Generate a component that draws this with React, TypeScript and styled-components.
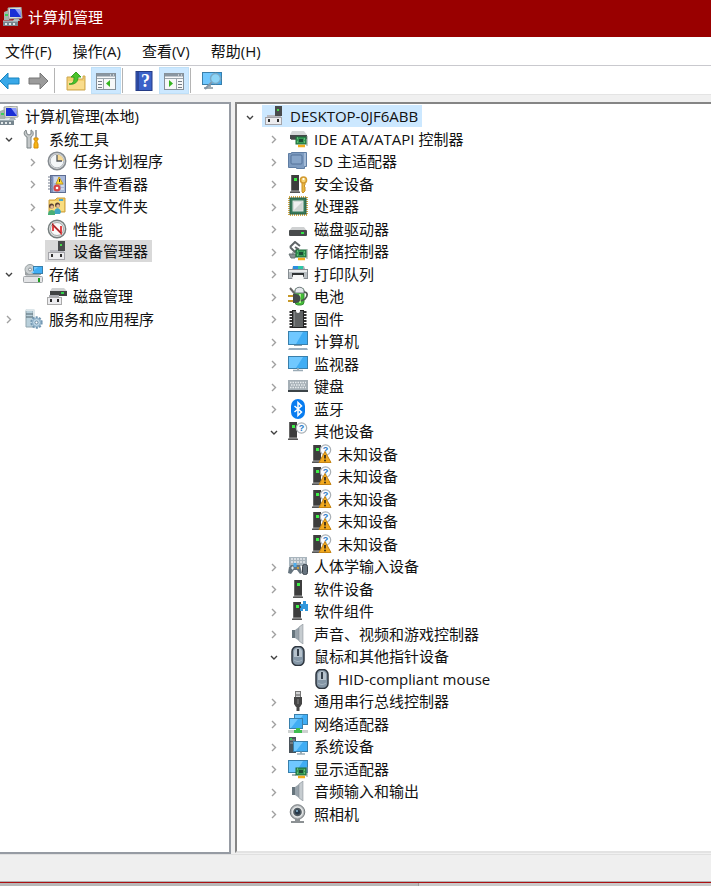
import React, { ReactNode } from "react";
import styled, { createGlobalStyle, css } from "styled-components";

const GlobalStyle = createGlobalStyle`
  * { box-sizing: border-box; }
  body { margin: 0; background: #f0f0f0; }
  button { font: inherit; color: inherit; background: none; border: 0; padding: 0; margin: 0; }
`;

const Window = styled.div`
  display: flex;
  flex-direction: column;
  min-height: 100vh;
  overflow: hidden;
  background: #f0f0f0;
  color: #111;
  font-family: "Open Sans", "Noto Sans CJK SC", sans-serif;
  font-size: 15px;
  line-height: 22px;
`;

const TitleBar = styled.header`
  display: flex;
  align-items: center;
  gap: 5px;
  height: 37px;
  padding: 0 3px 3px;
  background: #990000;
  color: #fff;
`;

const Title = styled.h1`
  margin: 0;
  font-size: 15px;
  font-weight: 400;
`;

const MenuBar = styled.nav`
  display: flex;
  align-items: center;
  gap: 21px;
  height: 28px;
  padding-left: 5px;
  background: #fff;
`;

const MenuItem = styled.button`
  white-space: nowrap;
`;

const Toolbar = styled.div`
  display: flex;
  align-items: center;
  height: 30px;
  border-top: 1px solid #c9c9ce;
  border-bottom: 1px solid #e4e4e4;
  background: #fff;
`;

const ToolButton = styled.button<{ $active?: boolean; $edge?: boolean }>`
  display: flex;
  align-items: center;
  justify-content: ${(p) => (p.$edge ? "flex-start" : "center")};
  width: ${(p) => (p.$edge ? 23 : 30)}px;
  height: 27px;
  padding-top: 1px;
  ${(p) =>
    p.$active &&
    css`
      background: #cce8ff;
      border: 1px solid #bfe0f8;
    `}
`;

const Separator = styled.span`
  width: 1px;
  height: 25px;
  margin: 0 6px 0 1px;
  background: #b4b4b4;
`;

const Panes = styled.main`
  display: flex;
  flex: 1;
  gap: 4px;
  padding-top: 7px;
`;

const NavPane = styled.section`
  flex: 0 0 auto;
  width: 231px;
  padding-top: 1px;
  overflow: hidden;
  background: #fff;
  border: solid #969ba3;
  border-width: 2px 2px 2px 0;
`;

const DevicePane = styled.section`
  flex: 1;
  min-width: 0;
  margin-bottom: 1px;
  padding: 1px 0 24px 1px;
  background: #fff;
  border: solid #858585;
  border-width: 2px 0 2px 2px;
  border-bottom-color: #e3e3e3;
`;

const TreeList = styled.ul<{ $shift?: boolean }>`
  display: grid;
  grid-auto-rows: 22px 23px;
  margin: 0 0 0 ${(p) => (p.$shift ? -3 : 0)}px;
  padding: 0;
  list-style: none;
`;

const TreeRow = styled.li<{ $depth: number }>`
  display: flex;
  padding-left: ${(p) => p.$depth * 24}px;
`;

const Expander = styled.button`
  display: flex;
  align-items: center;
  justify-content: center;
  width: 24px;
  padding-top: 1px;
`;

const Spacer = styled.span`
  width: 24px;
`;

const TreeItem = styled.button<{ $mark?: "active" | "muted" }>`
  display: flex;
  align-items: center;
  gap: 4px;
  padding-right: 4px;
  white-space: nowrap;
  text-align: left;
  background: ${(p) => (p.$mark === "active" ? "#cce8ff" : p.$mark === "muted" ? "#d9d9d9" : "transparent")};
`;

const IconBox = styled.span`
  display: flex;
  justify-content: center;
  width: 24px;
`;

const StatusBar = styled.footer`
  height: 28px;
  border-top: 1px solid #e0e0e0;
  border-bottom: 1px solid #b2b2b2;
  background: #efefef;
`;

const BottomEdge = styled.div`
  display: flex;
  height: 4px;
  border-top: 1px solid #ad1012;
  background: #cacaca;
`;

const BottomShade = styled.span`
  width: 59%;
  background: #b8b8b8;
  border-right: 1px solid #999;
`;

const Svg = ({ children }: { children: ReactNode }) => (
  <svg width="20" height="20" viewBox="0 0 20 20" aria-hidden="true">
    {children}
  </svg>
);

/* Shared icon parts */
const Tower = ({ x = 0 }: { x?: number }) => (
  <g transform={`translate(${x} 0)`}>
    <rect x="1" y="1" width="8" height="16" fill="#3d3d3d" />
    <rect x="1" y="1" width="1" height="16" fill="#666" />
    <path d="M1 17h8l1 1v1H0v-1z" fill="#555" />
    <path d="M1 17h8" stroke="#aaa" />
    <rect x="4" y="4" width="3" height="3" fill="#3df046" />
  </g>
);

const Card = ({ x, y }: { x: number; y: number }) => (
  <g transform={`translate(${x} ${y})`}>
    <path d="M11 -1v10" stroke="#8d9692" strokeWidth="1" />
    <rect x="0" y="0" width="10" height="7" fill="#379a57" stroke="#1d6c3b" />
    <rect x="3" y="2" width="4" height="3" fill="#1b4f35" />
    <path d="M1 1h1M8 2h1M1 5h1M8 5h1" stroke="#91e39a" />
    <path d="M2 9h7" stroke="#f2ac1e" strokeWidth="2.5" />
  </g>
);

const Screen = ({ x, y, w, h }: { x: number; y: number; w: number; h: number }) => (
  <g>
    <rect x={x + 0.5} y={y + 0.5} width={w - 1} height={h - 1} fill="#40adf4" stroke="#397fab" />
    <path d={`M${x + 1} ${y + 1}h${w - 6}l-7 ${h - 2}H${x + 1}z`} fill="#70c8ff" />
  </g>
);

const Question = ({ y = 7 }: { y?: number }) => (
  <g>
    <circle cx="13.5" cy={y} r="5.2" fill="#fafcff" stroke="#aab0b5" strokeWidth="1.2" />
    <text x="13.5" y={y + 3} textAnchor="middle" fontFamily="Liberation Sans" fontWeight="700" fontSize="9" fill="#2779c4">
      ?
    </text>
  </g>
);

const icons: Record<string, ReactNode> = {
  console: (
    <>
      <path d="M1 5l5-2v10H1z" fill="#a7b4ad" />
      <path d="M2 8h3" stroke="#39d05b" strokeWidth="2" />
      <path d="M5 1l13-1 1 11-13 1z" fill="#dedfd5" stroke="#9ba1a0" />
      <path d="M7 2h10l1 8H7z" fill="#1a2fd6" />
      <path d="M12 2h5l1 8z" fill="#8e9dfa" />
      <path d="M11 12h5l1 2h-7z" fill="#a9b2b8" />
      <path d="M0 14h15v5H0z" fill="#77868f" />
      <path d="M0 14h15" stroke="#c6d3d8" />
      <path d="M2 17h2M6 17h2M10 17h2" stroke="#e3e9ea" strokeWidth="2" />
    </>
  ),
  tools: (
    <>
      <path d="M3 1C0 3 1 7 4 8v11h4V8c3-1 3-6 0-7v4L6 6 4 5z" fill="#c4c8c9" stroke="#7d8587" />
      <path d="M12 1h2v10h-2z" fill="#a2a8ad" />
      <path d="M11 9h4v2h-1v2l1 2v4h-4v-4l1-2v-2h-1z" fill="#f6b414" stroke="#d68d08" />
    </>
  ),
  clock: (
    <>
      <circle cx="10" cy="10" r="8.7" fill="#d9dcde" stroke="#858b90" strokeWidth="1.5" />
      <circle cx="10" cy="10" r="6.8" fill="#f3f6f8" stroke="#b2b7bc" />
      <path d="M10 10V3.5a6.5 6.5 0 0 1 6.5 6.5z" fill="#f6d995" />
      <path d="M10 4v6h5" fill="none" stroke="#51565b" strokeWidth="1.3" />
    </>
  ),
  events: (
    <>
      <rect x="3.5" y="1.5" width="15" height="17" fill="#a9b9da" stroke="#5c6c92" />
      <path d="M5 2v16" stroke="#53699a" />
      <path d="M1 3h4M1 6h4M1 9h4M1 12h4M1 15h4" stroke="#717a8b" />
      <path d="M7 4h5M7 6h4M7 8h3M14 12h3M14 15h3" stroke="#f4f6fb" />
      <path d="M12 3l4 7H9z" fill="#ffdb35" stroke="#c59a1d" />
      <path d="M12.5 5v3" stroke="#333" />
      <circle cx="10" cy="14" r="3.5" fill="#d74345" />
      <circle cx="10" cy="14" r="1.3" fill="#fff" />
    </>
  ),
  shared: (
    <>
      <path d="M2 4h6l2-2h8v14H2z" fill="#eec75c" stroke="#cca03f" />
      <path d="M3 5h14v10H3z" fill="#f9dd80" />
      <path d="M12 4h4" stroke="#4ba9c9" strokeWidth="2" />
      <circle cx="4.5" cy="10" r="2.5" fill="#594033" />
      <circle cx="10.5" cy="9" r="2.5" fill="#594033" />
      <circle cx="5" cy="11" r="1.8" fill="#e6b992" />
      <circle cx="11" cy="10" r="1.8" fill="#e6b992" />
      <path d="M7 16c1-5 6-5 7 0l-1 2H8z" fill="#40a6c5" />
      <path d="M1 18c0-5 7-5 7-1v2H1z" fill="#49ae75" />
    </>
  ),
  performance: (
    <>
      <circle cx="10" cy="10" r="8.7" fill="#d9dcdc" stroke="#757d7d" strokeWidth="1.4" />
      <circle cx="10" cy="10" r="6.5" fill="#fafafa" stroke="#a6acac" />
      <path d="M6 12V6l8 8V7" fill="none" stroke="#df3133" strokeWidth="1.8" />
      <path d="M5 5l9 9" stroke="#7b3234" strokeWidth="1" />
    </>
  ),
  device: (
    <>
      <path d="M3 9h14v3H3z" fill="#b9bac0" />
      <rect x="11" y="0" width="7" height="10" fill="#484b4c" />
      <rect x="13" y="3" width="2" height="2" fill="#46da49" />
      <rect x="1.5" y="11.5" width="16" height="7" fill="#ececef" stroke="#a4a4a9" />
      <path d="M5 13v3M14 13v3" stroke="#2e2e2e" strokeWidth="2" />
    </>
  ),
  storage: (
    <>
      <path d="M2 7l3-3h9l4 4v3H2z" fill="#9b9fa2" />
      <circle cx="7" cy="5.5" r="5" fill="#cbd0d2" stroke="#9ba3a5" />
      <circle cx="7" cy="5.5" r="1.5" fill="#f8fafa" stroke="#8a9295" />
      <Screen x={10} y={2} w={10} h={8} />
      <path d="M3 11h13l3 3H1z" fill="#c4c7ca" />
      <rect x="0.5" y="12.5" width="19" height="6" rx="1" fill="#e3e4e6" stroke="#a1a5a8" />
      <path d="M16 14v4" stroke="#1c9b20" strokeWidth="2" />
    </>
  ),
  diskmgmt: (
    <>
      <path d="M5 2h12l3 3H3z" fill="#d0d2d3" />
      <rect x="3" y="5" width="17" height="5" fill="#404343" />
      <path d="M14 7h3" stroke="#30d349" strokeWidth="2" />
      <path d="M2 9h10v3H2z" fill="#a9abb0" />
      <rect x="0.5" y="11.5" width="14" height="7" fill="#ececef" stroke="#aaa" />
      <path d="M4 13v3M11 13v3" stroke="#282828" strokeWidth="2" />
    </>
  ),
  services: (
    <>
      <path d="M3 1h7v17H3z" fill="#b9d0db" stroke="#91a5ae" />
      <path d="M2 1l2-1h7l1 1v17h-2V2H2z" fill="#dce6ea" />
      <path d="M3 5h7M3 8h7" stroke="#526770" />
      <circle cx="13.5" cy="13.5" r="5.2" fill="#b9d2e4" stroke="#7397b2" strokeWidth="2" strokeDasharray="2 1.3" />
      <circle cx="13.5" cy="13.5" r="4" fill="#bbd5e6" stroke="#86a9c1" />
      <circle cx="13.5" cy="13.5" r="1.5" fill="#fff" stroke="#6d8da4" />
    </>
  ),
  ide: (
    <>
      <path d="M4 2h12l3 4H2z" fill="#d5d7d7" />
      <path d="M2 6h17v4H2z" fill="#454848" />
      <path d="M3 10h5v1H3z" fill="#777" />
      <Card x={8} y={8} />
    </>
  ),
  sd: (
    <>
      <path d="M0.5 2.5h3v-1h15v14h-2v2h-8v-1h-8z" fill="#7d9bc0" stroke="#5f7da3" />
      <rect x="3" y="4" width="11" height="9" rx="1" fill="#86a4c8" stroke="#54739a" />
      <path d="M17 2v13" stroke="#a3bad6" strokeWidth="2" />
    </>
  ),
  security: (
    <>
      <Tower x={2} />
      <path d="M14 8h3v3l-1 1 1 1v4l-2 2-1-1z" fill="#eab942" stroke="#c98f26" />
      <circle cx="15.5" cy="6" r="3" fill="#f6d474" stroke="#d29a31" strokeWidth="1.6" />
      <circle cx="15.5" cy="5" r="1" fill="#fff" />
    </>
  ),
  cpu: (
    <>
      <rect x="1" y="1" width="18" height="18" fill="none" stroke="#d8a744" strokeWidth="2" strokeDasharray="1 1" />
      <rect x="2" y="2" width="16" height="16" fill="#37795a" stroke="#2a6147" />
      <rect x="5" y="5" width="10" height="10" fill="#cfd4d2" stroke="#dbe4df" />
      <path d="M6 6h8l-8 8z" fill="#efefef" />
    </>
  ),
  disk: (
    <>
      <path d="M4 8h12l3 4H1z" fill="#cfd1d2" />
      <rect x="1" y="11" width="18" height="6" rx="1" fill="#484b4c" />
      <path d="M13 14h3" stroke="#32e647" strokeWidth="2" />
    </>
  ),
  storagectl: (
    <>
      <path d="M2 6l5-5 5 4M2 6l5 5 3-3-3-2" fill="none" stroke="#5f6567" strokeWidth="2" />
      <path d="M5 11v3M1 13h7l-1 4H3z" fill="#889194" stroke="#667173" />
      <Card x={8} y={9} />
    </>
  ),
  printer: (
    <>
      <path d="M4 5l1-3h11l1 3z" fill="#a7adb1" />
      <rect x="5" y="2" width="5" height="4" fill="#2b8ee0" />
      <rect x="10" y="2" width="5" height="4" fill="#2cc9a6" />
      <rect x="0.5" y="5.5" width="19" height="9" fill="#b9bfc3" stroke="#868d92" />
      <path d="M1 7h18" stroke="#e9ebec" strokeWidth="2" />
      <path d="M4 9h12v4H4z" fill="#2e3234" />
      <path d="M5 11h10l1 5H4z" fill="#f7f8f8" />
    </>
  ),
  battery: (
    <>
      <path d="M2 2l5 6" stroke="#666" strokeWidth="2" />
      <rect x="7" y="2" width="9" height="17" rx="3" fill="#42bd36" stroke="#398a38" />
      <path d="M7 5c0-5 9-5 9 0v2H7z" fill="#e5e8ec" stroke="#747b83" />
      <path d="M12 8v9" stroke="#a9ed88" strokeWidth="2" />
      <path d="M16 6c4 0 4 4 1 7l-4 2" fill="none" stroke="#4f5651" strokeWidth="1.7" />
      <path d="M0 10h5M0 15h5" stroke="#c79928" strokeWidth="2" />
      <path d="M5 8h3c6 0 6 9 0 9H5z" fill="#444a4b" />
    </>
  ),
  firmware: (
    <>
      <path d="M3 2v17M17 2v17" stroke="#333" strokeWidth="3" strokeDasharray="2 1" />
      <rect x="4.5" y="1.5" width="11" height="17" fill="#606364" stroke="#222" />
      <path d="M8 1h4v1a2 2 0 0 1-4 0z" fill="#fff" />
      <path d="M6.5 3v14" stroke="#808384" />
    </>
  ),
  computer: (
    <>
      <Screen x={0} y={0} w={20} h={14} />
      <path d="M6 14h8v1H6z" fill="#8fa2ae" />
      <path d="M1 17h18l1 2H0z" fill="#9aaebe" />
    </>
  ),
  monitor: (
    <>
      <Screen x={0} y={2} w={20} h={13} />
      <path d="M5 16.5h10M9 15h2" stroke="#9aabb6" strokeWidth="1.5" />
    </>
  ),
  keyboard: (
    <>
      <rect x="0" y="4" width="20" height="11" fill="#a5afb6" />
      <path d="M2 6.5h16M3 9h14M2 11.5h16" stroke="#e6ebee" strokeWidth="1.5" strokeDasharray="1.5 1" />
      <path d="M0 15h20" stroke="#3c4448" strokeWidth="2" />
    </>
  ),
  bluetooth: (
    <>
      <rect x="3" y="0" width="14" height="20" rx="7" fill="#087cf0" />
      <path d="M6.5 7l7 6-3.5 3.5v-13L13.500 7l-7 6" fill="none" stroke="#fff" strokeWidth="1.5" />
    </>
  ),
  other: (
    <>
      <Tower />
      <Question />
    </>
  ),
  unknown: (
    <>
      <Tower />
      <Question y={6} />
      <path d="M13 7.500l6 11H7z" fill="#f2a91e" stroke="#c58514" strokeLinejoin="round" />
      <path d="M13 11v3.500" stroke="#272015" strokeWidth="1.6" />
      <circle cx="13" cy="16.500" r="0.900" fill="#272015" />
    </>
  ),
  hid: (
    <>
      <rect x="1" y="1" width="18" height="9" fill="#a9b5bd" />
      <path d="M3 3h14M3 6h14" stroke="#e7eaee" strokeWidth="1.500" strokeDasharray="2 1" />
      <path d="M3 9h9l2 8-2 1-3-4H6l-3 4-3-1 1-6z" fill="#66747e" />
      <path d="M7 7v4" stroke="#4faceb" strokeWidth="3" />
      <path d="M3 12h3M4.500 10.500v3" stroke="#e3edf2" />
      <circle cx="10" cy="12" r="1" fill="#e5a42c" />
      <rect x="14.500" y="8.500" width="5" height="10" rx="2" fill="#66737e" stroke="#39424b" />
    </>
  ),
  software: <Tower x={5} />,
  component: (
    <>
      <Tower x={4} />
      <path d="M15 0h3v3h2v7h-3V8h-2v2h-3V7h1V5h-1V3h3z" fill="#3198dc" />
    </>
  ),
  speaker: (
    <>
      <path d="M4 6h4v8H4z" fill="#66747c" />
      <path d="M7 6l7-5v18l-7-5z" fill="#98a3ab" />
      <path d="M11 3l4-3v20l-4-3z" fill="#c6ccd0" stroke="#7c868d" strokeWidth=".5" />
    </>
  ),
  mouse: (
    <>
      <rect x="4" y="0.500" width="12" height="19" rx="5" fill="#8496a6" stroke="#2e363f" strokeWidth="1.500" />
      <path d="M6 5c1-4 7-4 8 0v6H6z" fill="#b6c2cc" />
      <path d="M10 3v7" stroke="#333e4a" strokeWidth="2" />
      <path d="M6 14c3 2 5 2 8 0" fill="none" stroke="#a9b7c3" />
    </>
  ),
  usb: (
    <>
      <rect x="7.500" y="0.500" width="5" height="7" fill="#d0d1d2" stroke="#777" />
      <path d="M9 3v2M11 3v2" stroke="#555" />
      <path d="M6 6h8v7l-2 3H8l-2-3z" fill="#454545" />
      <path d="M10 15v5" stroke="#444" strokeWidth="3" />
      <path d="M10 8v5" stroke="#888" />
    </>
  ),
  network: (
    <>
      <Screen x={6} y={0} w={14} h={11} />
      <Screen x={1} y={4} w={14} h={11} />
      <path d="M0 17.500h20" stroke="#cdd1d0" strokeWidth="3" />
      <path d="M8 14h4v2h2v3H6v-3h2z" fill="#3fbe4f" />
    </>
  ),
  system: (
    <>
      <rect x="1" y="1" width="7" height="16" fill="#4a545b" />
      <path d="M2 4h5M2 7h3" stroke="#98a1a8" />
      <rect x="2" y="2" width="2" height="2" fill="#38cb51" />
      <Screen x={5} y={5} w={15} h={11} />
      <path d="M9 18h8M12 16.500h2" stroke="#9cadb6" strokeWidth="1.500" />
    </>
  ),
  display: (
    <>
      <Screen x={0} y={1} w={20} h={13} />
      <path d="M4 16h4" stroke="#87989f" strokeWidth="1.500" />
      <Card x={8} y={9} />
    </>
  ),
  camera: (
    <>
      <circle cx="9.500" cy="8" r="7.300" fill="#b6babd" stroke="#74797c" />
      <circle cx="9.500" cy="8" r="5" fill="#505a61" stroke="#e4e6e6" strokeWidth="1.400" />
      <circle cx="9.500" cy="8" r="2.500" fill="#26384a" />
      <circle cx="9" cy="7" r="1" fill="#89b7d3" />
      <path d="M7 15h5v2h4v2H3v-2h4z" fill="#8c9194" />
    </>
  ),
  back: <path d="M0 10l8-8v5h11v6H8v5z" fill="#39a8e8" stroke="#1684c0" strokeLinejoin="round" />,
  forward: <path d="M20 10l-8-8v5H1v6h11v5z" fill="#9b9b9b" stroke="#777" strokeLinejoin="round" />,
  folderup: (
    <>
      <path d="M1 6h6l2 2h8V5h2v14H1z" fill="#f3cf70" stroke="#cda750" />
      <path d="M2 10h16v8H2z" fill="#f9dc8c" />
      <path d="M3 13c5 0 5-4 5-7H5l5-5 5 5h-3c0 5-3 8-9 7z" fill="#4ac32b" stroke="#36a322" />
    </>
  ),
  showtree: (
    <>
      <rect x="0.5" y="2.5" width="19" height="16" fill="#f7f8f9" stroke="#858f98" />
      <path d="M1 4h18" stroke="#8a96a1" strokeWidth="3" />
      <path d="M14 4h1M17 4h1" stroke="#fff" />
      <path d="M1 7.500h18M7.500 8v10" stroke="#9da6ad" />
      <path d="M2 10.500h4M2 13.500h4M2 16.500h4" stroke="#777f88" />
      <path d="M14 9v7l-4-3.500z" fill="#35b51f" />
    </>
  ),
  showactions: (
    <>
      <rect x="0.5" y="2.5" width="19" height="16" fill="#f7f8f9" stroke="#858f98" />
      <path d="M1 4h18" stroke="#8a96a1" strokeWidth="3" />
      <path d="M14 4h1M17 4h1" stroke="#fff" />
      <path d="M1 7.500h18M12.500 8v10" stroke="#9da6ad" />
      <path d="M14 10.500h4M14 13.500h4M14 16.500h4" stroke="#777f88" />
      <path d="M5 9v7l4-3.500z" fill="#35b51f" />
    </>
  ),
  help: (
    <>
      <rect x="2" y="0.5" width="16" height="19" fill="#3b62c8" stroke="#243b85" />
      <path d="M4 1v18" stroke="#2b479c" strokeWidth="2" />
      <text x="11.5" y="16" textAnchor="middle" fontFamily="Liberation Serif" fontWeight="700" fontSize="18" fill="#fff">
        ?
      </text>
    </>
  ),
  scan: (
    <>
      <Screen x={0} y={1} w={20} h={13} />
      <path d="M2 17h9M8 14v2" stroke="#82919b" strokeWidth="1.500" />
      <path d="M10 11l-7 7" stroke="#8297a8" strokeWidth="2" />
      <circle cx="13.500" cy="7.500" r="5" fill="#8dd4f6" stroke="#7aaac7" strokeWidth="1.500" />
    </>
  ),
};

const Icon = ({ name }: { name: string }) => <Svg>{icons[name]}</Svg>;

const Chevron = ({ open }: { open?: boolean }) => (
  <svg width="10" height="10" viewBox="0 0 10 10" aria-hidden="true">
    <path
      d={open ? "M2 4l3 3 3-3" : "M3 2l3.5 3.5L3 9"}
      fill="none"
      stroke={open ? "#404040" : "#a0a0a0"}
      strokeWidth="1.4"
    />
  </svg>
);

type Node = {
  depth: number;
  icon: string;
  label: string;
  state?: "open" | "closed";
  mark?: "active" | "muted";
  root?: boolean;
};

const navNodes: Node[] = [
  { depth: 0, icon: "console", label: "计算机管理(本地)", root: true },
  { depth: 0, icon: "tools", label: "系统工具", state: "open" },
  { depth: 1, icon: "clock", label: "任务计划程序", state: "closed" },
  { depth: 1, icon: "events", label: "事件查看器", state: "closed" },
  { depth: 1, icon: "shared", label: "共享文件夹", state: "closed" },
  { depth: 1, icon: "performance", label: "性能", state: "closed" },
  { depth: 1, icon: "device", label: "设备管理器", mark: "muted" },
  { depth: 0, icon: "storage", label: "存储", state: "open" },
  { depth: 1, icon: "diskmgmt", label: "磁盘管理" },
  { depth: 0, icon: "services", label: "服务和应用程序", state: "closed" },
];

const category = (icon: string, label: string, state: "open" | "closed" = "closed"): Node => ({
  depth: 1,
  icon,
  label,
  state,
});

const deviceNodes: Node[] = [
  { depth: 0, icon: "device", label: "DESKTOP-0JF6ABB", state: "open", mark: "active" },
  category("ide", "IDE ATA/ATAPI 控制器"),
  category("sd", "SD 主适配器"),
  category("security", "安全设备"),
  category("cpu", "处理器"),
  category("disk", "磁盘驱动器"),
  category("storagectl", "存储控制器"),
  category("printer", "打印队列"),
  category("battery", "电池"),
  category("firmware", "固件"),
  category("computer", "计算机"),
  category("monitor", "监视器"),
  category("keyboard", "键盘"),
  category("bluetooth", "蓝牙"),
  category("other", "其他设备", "open"),
  ...Array.from({ length: 5 }, (): Node => ({ depth: 2, icon: "unknown", label: "未知设备" })),
  category("hid", "人体学输入设备"),
  category("software", "软件设备"),
  category("component", "软件组件"),
  category("speaker", "声音、视频和游戏控制器"),
  category("mouse", "鼠标和其他指针设备", "open"),
  { depth: 2, icon: "mouse", label: "HID-compliant mouse" },
  category("usb", "通用串行总线控制器"),
  category("network", "网络适配器"),
  category("system", "系统设备"),
  category("display", "显示适配器"),
  category("speaker", "音频输入和输出"),
  category("camera", "照相机"),
];

const Tree = ({ nodes, label, shift }: { nodes: Node[]; label: string; shift?: boolean }) => (
  <TreeList aria-label={label} $shift={shift}>
    {nodes.map((n, i) => (
      <TreeRow key={i} $depth={n.depth}>
        {n.state ? (
          <Expander aria-label={n.label} aria-expanded={n.state === "open"}>
            <Chevron open={n.state === "open"} />
          </Expander>
        ) : (
          !n.root && <Spacer />
        )}
        <TreeItem $mark={n.mark}>
          <IconBox>
            <Icon name={n.icon} />
          </IconBox>
          {n.label}
        </TreeItem>
      </TreeRow>
    ))}
  </TreeList>
);

export default function App() {
  return (
    <Window>
      <GlobalStyle />
      <TitleBar>
        <Icon name="console" />
        <Title>计算机管理</Title>
      </TitleBar>
      <MenuBar>
        {["文件(F)", "操作(A)", "查看(V)", "帮助(H)"].map((m) => (
          <MenuItem key={m}>{m}</MenuItem>
        ))}
      </MenuBar>
      <Toolbar role="toolbar">
        <ToolButton $edge aria-label="后退"><Icon name="back" /></ToolButton>
        <ToolButton aria-label="前进"><Icon name="forward" /></ToolButton>
        <Separator />
        <ToolButton aria-label="向上"><Icon name="folderup" /></ToolButton>
        <ToolButton $active aria-label="显示控制台树"><Icon name="showtree" /></ToolButton>
        <Separator />
        <ToolButton aria-label="帮助"><Icon name="help" /></ToolButton>
        <ToolButton $active aria-label="显示操作窗格"><Icon name="showactions" /></ToolButton>
        <Separator />
        <ToolButton aria-label="扫描硬件"><Icon name="scan" /></ToolButton>
      </Toolbar>
      <Panes>
        <NavPane>
          <Tree nodes={navNodes} label="控制台" shift />
        </NavPane>
        <DevicePane>
          <Tree nodes={deviceNodes} label="设备" />
        </DevicePane>
      </Panes>
      <StatusBar />
      <BottomEdge>
        <BottomShade />
      </BottomEdge>
    </Window>
  );
}
